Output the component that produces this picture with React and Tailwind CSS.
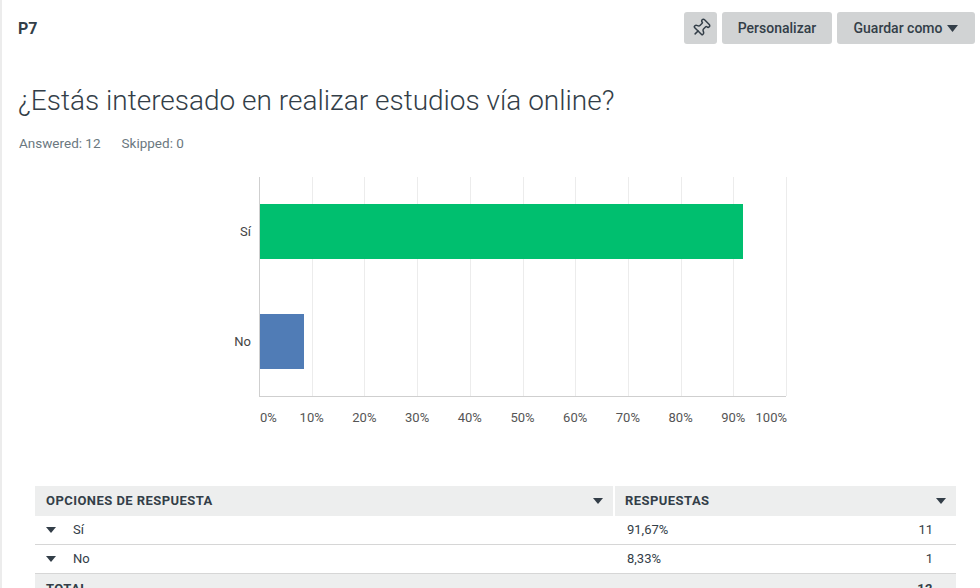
import React from "react";

const F = { fontFamily: "Roboto, 'Liberation Sans', sans-serif" };

function Tri({ className = "" }) {
  return (
    <svg width="10" height="6" viewBox="0 0 10 6" className={className}>
      <path d="M0 0 L10 0 L5 6 Z" fill="#333e48" />
    </svg>
  );
}

function PinIcon() {
  return (
    <svg width="20" height="20" viewBox="0 0 24 24" fill="none" stroke="#333e48" strokeWidth="1.8" strokeLinejoin="round" strokeLinecap="round">
      <g transform="rotate(45 12 12)">
        <path d="M12 17v5" />
        <path d="M9 10.76a2 2 0 0 1-1.11 1.79l-1.78.9A2 2 0 0 0 5 15.24V16a1 1 0 0 0 1 1h12a1 1 0 0 0 1-1v-.76a2 2 0 0 0-1.110-1.79l-1.78-.9A2 2 0 0 1 15 10.76V7a1 1 0 0 1 1-1 2 2 0 0 0 0-4H8a2 2 0 0 0 0 4 1 1 0 0 1 1 1z" />
      </g>
    </svg>
  );
}

const data = [
  { label: "Sí", pct: 91.67, color: "#00bf6f", count: 11, txt: "91,67%" },
  { label: "No", pct: 8.33, color: "#507cb6", count: 1, txt: "8,33%" },
];

const ticks = [0, 10, 20, 30, 40, 50, 60, 70, 80, 90, 100];

export default function App() {
  const plotW = 527;
  return (
    <div style={F} className="w-[980px] h-[588px] overflow-hidden bg-white border-l-2 border-[#ececec] text-[#333e48]">
      {/* header */}
      <div className="flex items-center justify-between pl-[16px] pr-[5px] pt-[12px]">
        <div className="text-[16px] font-bold pt-[1px]">P7</div>
        <div className="flex gap-[5px]">
          <button className="w-[33px] h-[32px] rounded-[3px] bg-[#d1d3d4] flex items-center justify-center">
            <PinIcon />
          </button>
          <button className="w-[110px] h-[32px] rounded-[3px] bg-[#d1d3d4] text-[14px] font-medium text-[#333e48]">Personalizar</button>
          <button className="w-[138px] h-[32px] rounded-[3px] bg-[#d1d3d4] text-[14px] font-medium text-[#333e48] flex items-center justify-center gap-[5px]">
            Guardar como
            <svg width="11" height="7" viewBox="0 0 11 7"><path d="M0 0 L11 0 L5.5 7 Z" fill="#333e48" /></svg>
          </button>
        </div>
      </div>

      {/* title */}
      <h1 className="mt-[40px] pl-[16px] text-[28px] leading-[34px] font-light text-[#333e48]">¿Estás interesado en realizar estudios vía online?</h1>
      <div className="mt-[16px] pl-[17px] flex gap-[21px] text-[13.5px] leading-[18px] text-[#6b787f]">
        <span>Answered: 12</span>
        <span>Skipped: 0</span>
      </div>

      {/* chart */}
      <div className="mt-[25px] flex">
        <div className="w-[257px] flex flex-col pr-[8px]">
          {data.map((d) => (
            <div key={d.label} className="h-[109.5px] flex items-center justify-end text-[13px] text-[#444]">{d.label}</div>
          ))}
        </div>
        <div className="flex flex-col">
          <div className="relative h-[220px] border-l border-b border-[#cfcfcf]" style={{ width: plotW }}>
            {ticks.slice(1).map((t) => (
              <div key={t} className="absolute top-0 bottom-0 w-px bg-[#ececec]" style={{ left: (plotW * t) / 100 - 1 }} />
            ))}
            <div className="relative flex flex-col">
              {data.map((d) => (
                <div key={d.label} className="h-[109.5px] flex items-center">
                  <div className="h-[55px]" style={{ width: (plotW * d.pct) / 100, background: d.color }} />
                </div>
              ))}
            </div>
          </div>
          <div className="relative h-[30px] text-[13px] text-[#555]" style={{ width: plotW }}>
            {ticks.map((t) => {
              const x = (plotW * t) / 100;
              let style;
              if (t === 0) style = { left: 1 };
              else if (t === 100) style = { right: -1 };
              else style = { left: x, transform: "translateX(-50%)" };
              return (
                <span key={t} className="absolute top-[11px]" style={style}>{t}%</span>
              );
            })}
          </div>
        </div>
      </div>

      {/* table */}
      <div className="mt-[59px] ml-[33px] w-[921px] text-[13px]">
        <div className="flex h-[30px] bg-[#edeeee] text-[13px] font-bold tracking-[0.45px]">
          <div className="w-[580px] flex items-center justify-between pl-[11px] pr-[10px] border-r-2 border-white">
            <span>OPCIONES DE RESPUESTA</span>
            <Tri />
          </div>
          <div className="flex-1 flex items-center justify-between pl-[10px] pr-[10px]">
            <span>RESPUESTAS</span>
            <Tri />
          </div>
        </div>
        {data.map((d) => (
          <div key={d.label} className="flex h-[29px] border-b border-[#d6d6d6] items-center">
            <div className="w-[580px] flex items-center pl-[11px]">
              <Tri />
              <span className="ml-[17px]">{d.label}</span>
            </div>
            <div className="flex-1 flex justify-between pl-[12px] pr-[23px]">
              <span>{d.txt}</span>
              <span>{d.count}</span>
            </div>
          </div>
        ))}
        <div className="flex h-[30px] bg-[#edeeee] font-bold text-[13px] items-center tracking-[0.45px]">
          <div className="w-[580px] pl-[11px]">TOTAL</div>
          <div className="flex-1 text-right pr-[23px]">12</div>
        </div>
      </div>
    </div>
  );
}
